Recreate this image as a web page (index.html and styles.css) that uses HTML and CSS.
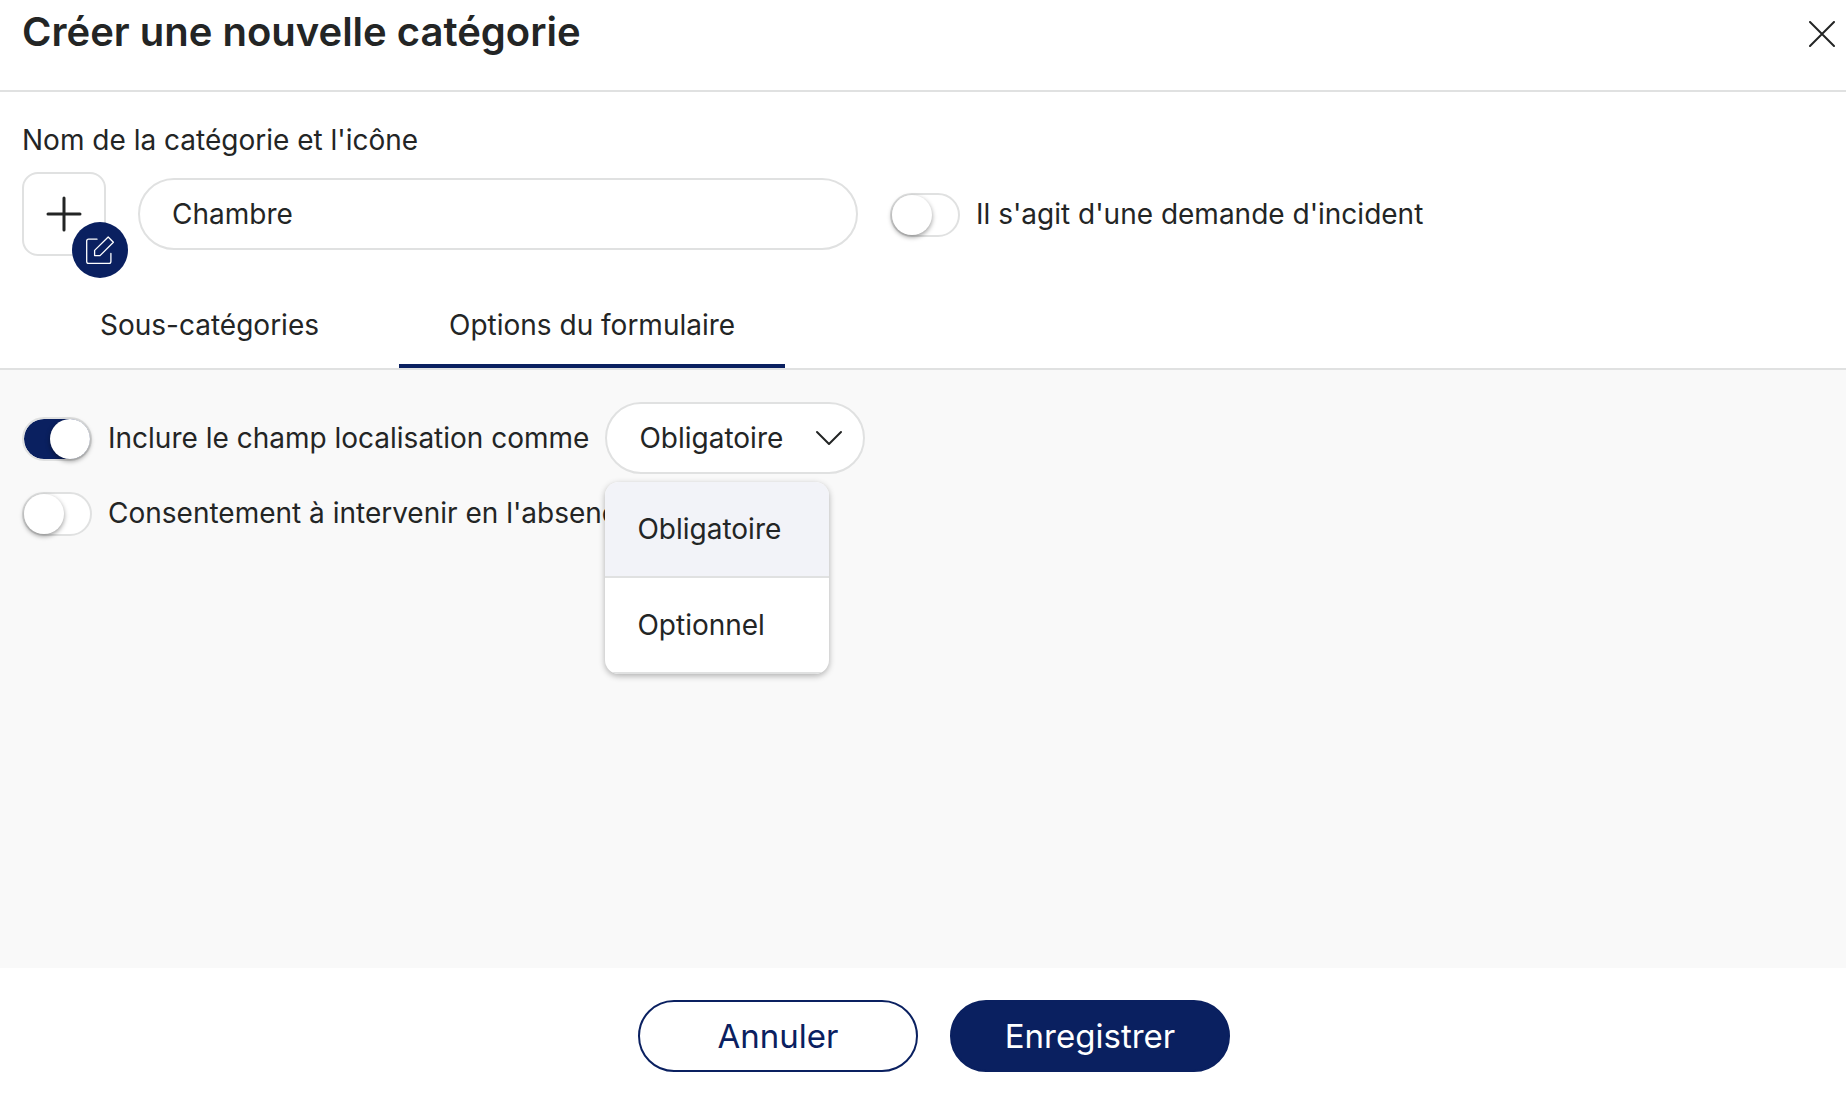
FILE: index.html
```html
<!DOCTYPE html>
<html lang="fr">
<head>
<meta charset="utf-8">
<meta name="viewport" content="width=device-width, initial-scale=1">
<title>Créer une nouvelle catégorie</title>
<link rel="stylesheet" href="styles.css">
</head>
<body>
<form class="dialog">
  <header class="dialog-header">
    <h1 class="dialog-title">Créer une nouvelle catégorie</h1>
    <button class="close-button" type="button" aria-label="Fermer">
      <svg width="26" height="26" viewBox="0 0 26 26" fill="none" stroke="currentColor" stroke-width="2" stroke-linecap="round"><path d="M1 1L25 25M25 1L1 25"/></svg>
    </button>
  </header>

  <section class="category">
    <label class="category-label" for="category-name">Nom de la catégorie et l'icône</label>
    <div class="category-row">
      <div class="icon-picker">
        <button class="icon-add" type="button" aria-label="Ajouter une icône">
          <svg width="36" height="36" viewBox="0 0 36 36" fill="none" stroke="currentColor" stroke-width="3" stroke-linecap="round"><path d="M18 2V34M2 18H34"/></svg>
        </button>
        <button class="icon-edit" type="button" aria-label="Modifier l'icône">
          <svg width="28" height="28" viewBox="0 0 28 28" fill="none" stroke="currentColor" stroke-width="1.3" stroke-linecap="round" stroke-linejoin="round"><path d="M11 3.2H2.6Q.7 3.2 .7 5.1V25.4Q.7 27.3 2.6 27.3H23Q24.9 27.3 24.9 25.4V17.5"/><path d="M22.2 1L27.4 6.2L14 19.6H8.6V14.4Z"/></svg>
        </button>
      </div>
      <input class="name-input" id="category-name" type="text" value="Chambre">
      <label class="switch-row"><input class="switch" type="checkbox" role="switch">Il s'agit d'une demande d'incident</label>
    </div>
  </section>

  <nav class="tabs" role="tablist">
    <button class="tab" type="button" role="tab" aria-selected="false">Sous-catégories</button>
    <button class="tab" type="button" role="tab" aria-selected="true">Options du formulaire</button>
  </nav>

  <main class="options">
    <div class="option">
      <label class="switch-row"><input class="switch" type="checkbox" role="switch" checked>Inclure le champ localisation comme</label>
      <div class="dropdown">
        <select class="dropdown-select" aria-label="Champ localisation">
          <option selected>Obligatoire</option>
          <option>Optionnel</option>
        </select>
        <svg class="dropdown-arrow" width="28" height="16" viewBox="0 0 28 16" fill="none" stroke="currentColor" stroke-width="2" stroke-linecap="round" stroke-linejoin="round"><path d="M2 2L14 14L26 2"/></svg>
        <div class="menu">
          <button class="menu-item menu-item-active" type="button">Obligatoire</button>
          <button class="menu-item" type="button">Optionnel</button>
        </div>
      </div>
    </div>
    <div class="option">
      <label class="switch-row"><input class="switch" type="checkbox" role="switch">Consentement à intervenir en l'absence</label>
    </div>
  </main>

  <footer class="dialog-footer">
    <button class="button" type="button">Annuler</button>
    <button class="button button-primary" type="submit">Enregistrer</button>
  </footer>
</form>
</body>
</html>
```
FILE: styles.css
```css
:root {
  --navy: #0a2060;
  --ink: #232525;
  --line: #e0e1e1;
}

* {
  box-sizing: border-box;
}

body {
  margin: 0;
  background: #fff;
  color: var(--ink);
  font: 400 28px/36px Inter, "Liberation Sans", sans-serif;
}

button,
input,
select {
  margin: 0;
  padding: 0;
  border: 0;
  background: none;
  color: inherit;
  font: inherit;
}

svg {
  display: block;
}

.dialog {
  display: flex;
  flex-direction: column;
  min-height: 100vh;
}

.dialog-header {
  display: flex;
  align-items: center;
  justify-content: space-between;
  padding: 8px 11px 34px 22px;
  border-bottom: 2px solid var(--line);
}

.dialog-title {
  margin: 0;
  font-size: 40px;
  line-height: 48px;
  font-weight: 600;
}

.close-button {
  padding-top: 4px;
}

.category {
  padding: 30px 22px 0;
}

.category-label {
  display: block;
  line-height: 36px;
}

.category-row {
  display: flex;
  align-items: center;
  gap: 32px;
  margin-top: 14px;
}

.icon-picker {
  position: relative;
  flex: none;
}

.icon-add {
  display: grid;
  place-items: center;
  width: 84px;
  height: 84px;
  border: 2px solid var(--line);
  border-radius: 16px;
}

.icon-edit {
  position: absolute;
  right: -22px;
  bottom: -22px;
  display: grid;
  place-items: center;
  width: 56px;
  height: 56px;
  border-radius: 50%;
  background: var(--navy);
  color: #fff;
}

.name-input {
  width: 720px;
  height: 72px;
  padding: 0 32px;
  border: 2px solid var(--line);
  border-radius: 36px;
}

.switch-row {
  display: flex;
  align-items: center;
  gap: 16px;
  white-space: nowrap;
}

.switch {
  appearance: none;
  display: flex;
  flex: none;
  width: 70px;
  height: 44px;
  margin-top: 2px;
  border: 2px solid var(--line);
  border-radius: 22px;
  background: #fff;
}

.switch::before {
  content: "";
  width: 40px;
  height: 40px;
  border-radius: 50%;
  background: #fff;
  box-shadow: 0 2px 5px rgb(0 0 0 / 40%);
}

.switch:checked {
  justify-content: flex-end;
  background: var(--navy);
  background-clip: padding-box;
}

.tabs {
  display: flex;
  gap: 30px;
  padding: 26px 50px 0;
  border-bottom: 2px solid var(--line);
}

.tab {
  padding: 25px 50px 21px;
  border-bottom: 4px solid transparent;
}

.tab[aria-selected="true"] {
  border-color: var(--navy);
}

.options {
  flex: 1;
  display: flex;
  flex-direction: column;
  gap: 16px;
  padding: 32px 22px;
  background: #f9f9f9;
}

.option {
  display: flex;
  align-items: center;
  gap: 16px;
}

.dropdown {
  position: relative;
}

.dropdown-select {
  appearance: none;
  display: block;
  width: 260px;
  height: 72px;
  padding: 0 72px 0 32px;
  border: 2px solid var(--line);
  border-radius: 36px;
  background: #fff;
}

.dropdown-arrow {
  position: absolute;
  top: 28px;
  right: 22px;
  pointer-events: none;
}

.menu {
  position: absolute;
  top: 80px;
  left: 0;
  z-index: 1;
  width: 224px;
  overflow: hidden;
  border-radius: 14px;
  background: #fff;
  box-shadow: 0 2px 6px rgb(0 0 0 / 30%);
}

.menu-item {
  display: block;
  width: 100%;
  padding: 29px 32px;
  border-bottom: 2px solid var(--line);
  text-align: left;
}

.menu-item-active {
  background: #f2f3f8;
}

.dialog-footer {
  display: flex;
  justify-content: center;
  gap: 32px;
  padding: 32px 0 34px 22px;
}

.button {
  width: 280px;
  height: 72px;
  border: 2px solid var(--navy);
  border-radius: 36px;
  color: var(--navy);
  font-size: 33px;
}

.button-primary {
  background: var(--navy);
  color: #fff;
}
```
